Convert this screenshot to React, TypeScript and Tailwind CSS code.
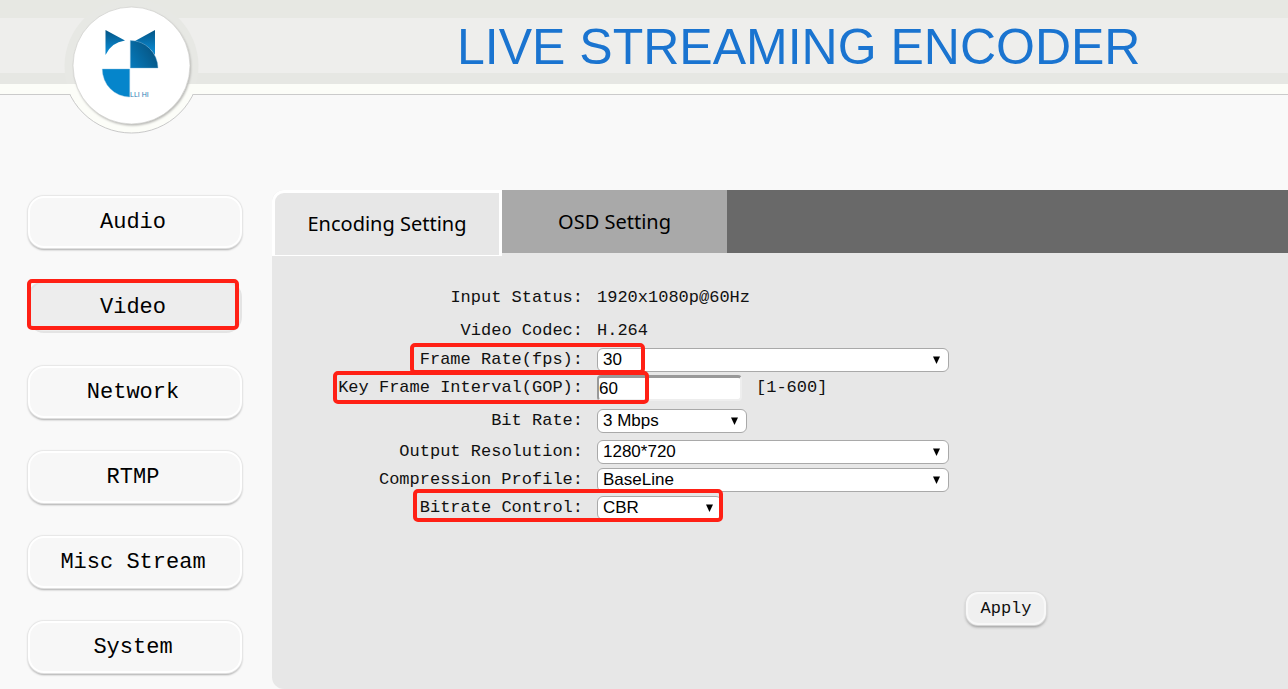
import { useState } from "react";
import type { ReactNode } from "react";

const menuItems = ["Audio", "Video", "Network", "RTMP", "Misc Stream", "System"];

function Logo() {
  return (
    <svg
      className="absolute left-[60px] top-0"
      width="144"
      height="136"
      viewBox="60 0 144 136"
      role="img"
      aria-label="LLIHI"
    >
      <defs>
        <clipPath id="ring-top">
          <rect x="60" y="0" width="144" height="84" />
        </clipPath>
        <clipPath id="ring-bottom">
          <rect x="60" y="84" width="144" height="52" />
        </clipPath>
        <clipPath id="ring-outline">
          <rect x="60" y="94" width="144" height="42" />
        </clipPath>
        <linearGradient id="ear" x1="0" y1="0" x2="0" y2="1">
          <stop offset="0" stopColor="#045585" />
          <stop offset="0.8" stopColor="#0a86cc" />
        </linearGradient>
        <linearGradient id="head" x1="1" y1="0.4" x2="0" y2="1">
          <stop offset="0" stopColor="#06527f" />
          <stop offset="1" stopColor="#067bbd" />
        </linearGradient>
        <filter id="disc-shadow" x="-10%" y="-10%" width="120%" height="120%">
          <feGaussianBlur stdDeviation="1" />
        </filter>
      </defs>

      {/* ring around the disc, split where it crosses the header line */}
      <circle cx="131.5" cy="66" r="67" fill="#e7e8e4" clipPath="url(#ring-top)" />
      <circle cx="131.5" cy="64.5" r="68.5" fill="#fcfdf8" clipPath="url(#ring-bottom)" />
      <circle cx="131.5" cy="64.5" r="68.5" fill="none" stroke="#c9c9c9" clipPath="url(#ring-outline)" />

      <circle cx="132.5" cy="67" r="58.5" fill="#b5b5b2" filter="url(#disc-shadow)" />
      <circle cx="131.5" cy="65.5" r="58.5" fill="#fff" stroke="#cfcfcc" strokeWidth="0.7" />

      <path d="M105.5 30 L125 40.5 Q111 42.5 105.5 55 Z" fill="url(#ear)" />
      <path d="M155 30 L135 41 Q148 44 155 55 Z" fill="url(#ear)" />
      <path
        d="M130.3 40.5 A27.5 28 0 0 1 158 68 H130.3 Z"
        fill="url(#head)"
        stroke="#7fb9dc"
        strokeWidth="0.4"
      />
      <path
        d="M102.3 69 H129.7 V97 A27.5 28 0 0 1 102.3 69 Z"
        fill="#0585cb"
        stroke="#7fb9dc"
        strokeWidth="0.4"
      />
      <text x="130" y="97" fontSize="7" fontFamily="Liberation Sans, sans-serif" fill="#2a7db5">
        LLI HI
      </text>
    </svg>
  );
}

// red frame laid over the things the user has to set
function Marker({ className }: { className: string }) {
  return (
    <span
      aria-hidden="true"
      className={`pointer-events-none absolute z-10 rounded-[5px] border-4 border-[#ff2015] ${className}`}
    />
  );
}

function Row({
  label,
  id,
  height,
  marker,
  children,
}: {
  label: string;
  id?: string;
  height: string;
  marker?: string;
  children: ReactNode;
}) {
  return (
    <div className={`relative flex items-center gap-3.5 ${height}`}>
      {id ? (
        <label htmlFor={id} className="w-[311px] shrink-0 whitespace-nowrap text-right">
          {label}
        </label>
      ) : (
        <span className="w-[311px] shrink-0 whitespace-nowrap text-right">{label}</span>
      )}
      {children}
      {marker && <Marker className={marker} />}
    </div>
  );
}

function Select({ id, options, width }: { id: string; options: string[]; width: string }) {
  return (
    <div className={`relative ${width}`}>
      <select
        id={id}
        className="block h-6 w-full appearance-none rounded-md border border-[#a9a9a9] bg-white pl-[5px] pr-6 font-['Liberation_Sans',sans-serif] text-[17px] leading-5 text-black"
      >
        {options.map((o) => (
          <option key={o}>{o}</option>
        ))}
      </select>
      <svg className="pointer-events-none absolute right-[9px] top-2" width="7" height="8" viewBox="0 0 7 8">
        <path d="M0 0.5 H7 L3.5 8 Z" fill="#000" />
      </svg>
    </div>
  );
}

export default function App() {
  const [active, setActive] = useState("Video");
  const [gop, setGop] = useState("60");

  return (
    <div className="flex min-h-screen flex-col bg-[#f9f9f9] font-['Liberation_Mono',monospace] text-black">
      <header className="relative border-b border-[#cbcbcb] bg-[#fcfdf8] pb-2.5">
        <div className="border-b-[11px] border-t-[18px] border-b-[#e6e7e3] border-t-[#e7e8e3] bg-[#eeeeec] pl-[457px] pt-1">
          <h1 className="whitespace-nowrap font-['Liberation_Sans',sans-serif] text-[50px] leading-[51px] text-[#1a74d0]">
            LIVE STREAMING ENCODER
          </h1>
        </div>
        <Logo />
      </header>

      <div className="flex flex-1 pt-[95px]">
        <nav className="flex w-[272px] shrink-0 flex-col gap-[33px] pl-7 pt-1.5">
          {menuItems.map((item) => (
            <div key={item} className="relative w-[214px]">
              <button
                type="button"
                onClick={() => setActive(item)}
                className={`block h-[52px] w-full rounded-2xl border-2 pr-1 pt-0.5 text-[22px] leading-6 ${
                  active === item
                    ? "border-[#e4e4e4] bg-[#ededed]"
                    : "border-white bg-[#f7f7f7] shadow-[0_0_1px_1px_#e6e6e6,0_2px_2px_#a8a8a8]"
                }`}
              >
                {item}
              </button>
              {item === "Video" && <Marker className="-left-px -top-0.5 h-[51px] w-[212px]" />}
            </div>
          ))}
        </nav>

        <main className="flex min-w-0 flex-1 flex-col rounded-bl-xl rounded-tl-xl bg-[#e7e7e7]">
          <div
            role="tablist"
            className="flex h-[66px] items-start font-['Noto_Sans',sans-serif] text-[20px] leading-7"
          >
            <button
              type="button"
              role="tab"
              aria-selected="true"
              className="h-[66px] w-[230px] rounded-tl-xl border-[3px] border-b border-white bg-[#e7e7e7]"
            >
              Encoding Setting
            </button>
            <button type="button" role="tab" aria-selected="false" className="h-[63px] w-[225px] bg-[#a9a9a9]">
              OSD Setting
            </button>
            <div className="h-[63px] flex-1 bg-[#696969]" />
          </div>

          <form className="pt-[26px] text-[17px] leading-6 text-[#111]" onSubmit={(e) => e.preventDefault()}>
            <Row label="Input Status:" height="h-8">
              <span>1920x1080p@60Hz</span>
            </Row>
            <Row label="Video Codec:" height="h-[34px]">
              <span>H.264</span>
            </Row>
            <Row label="Frame Rate(fps):" id="fps" height="h-6" marker="left-[138px] -top-[5px] h-[31px] w-[235px]">
              <Select id="fps" options={["30", "25", "60"]} width="w-[352px]" />
            </Row>
            <Row
              label="Key Frame Interval(GOP):"
              id="gop"
              height="h-8"
              marker="left-[61px] -top-px h-[33px] w-[316px]"
            >
              <input
                id="gop"
                value={gop}
                onChange={(e) => setGop(e.target.value)}
                className="h-[26px] w-[145px] rounded border-2 border-b-[#eee] border-l-[#999] border-r-[#eee] border-t-[3px] border-t-[#999] bg-white font-['Liberation_Sans',sans-serif] text-[17px] text-black"
              />
              <span>[1-600]</span>
            </Row>
            <Row label="Bit Rate:" id="bitrate" height="h-[34px]">
              <Select id="bitrate" options={["3 Mbps", "2 Mbps", "1 Mbps"]} width="w-[150px]" />
            </Row>
            <Row label="Output Resolution:" id="resolution" height="h-7">
              <Select id="resolution" options={["1280*720", "1920*1080"]} width="w-[352px]" />
            </Row>
            <Row label="Compression Profile:" id="profile" height="h-7">
              <Select id="profile" options={["BaseLine", "Main", "High"]} width="w-[352px]" />
            </Row>
            <Row
              label="Bitrate Control:"
              id="control"
              height="h-7"
              marker="left-[141px] -top-[5px] h-[33px] w-[310px]"
            >
              <Select id="control" options={["CBR", "VBR"]} width="w-[125px]" />
            </Row>

            <button
              type="submit"
              className="mb-16 ml-[694px] mt-[70px] block h-[33px] w-20 rounded-xl border-2 border-[#f8f8f8] bg-[#f0f0f0] text-[17px] leading-6 shadow-[0_0_1px_1px_#dcdcdc,0_2px_3px_#8f8f8f]"
            >
              Apply
            </button>
          </form>
        </main>
      </div>
    </div>
  );
}
